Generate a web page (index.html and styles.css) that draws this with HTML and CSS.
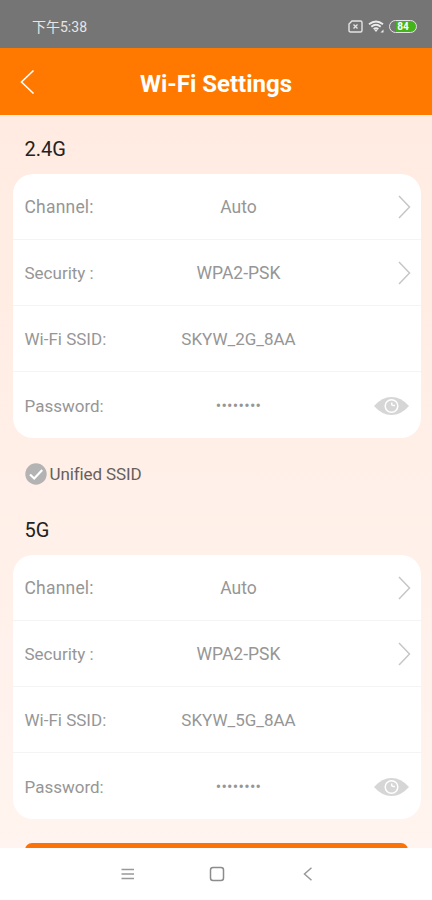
FILE: index.html
```html
<!DOCTYPE html>
<html lang="en">
<head>
  <meta charset="UTF-8" />
  <meta name="viewport" content="width=device-width, initial-scale=1" />
  <title>Wi-Fi Settings</title>
  <link rel="stylesheet" href="styles.css">
</head>
<body>

  <div class="status-bar">
    <span class="time">下午5:38</span>
    <div class="status-icons">
      <svg class="sim" width="15" height="13" viewBox="0 0 15 13">
        <path d="M4 1h8.500q1.500 0 1.500 1.500v8q0 1.500-1.500 1.500h-10q-1.500 0-1.500-1.500V4z" fill="none" stroke="#e4e4e4" stroke-width="1.400"/>
        <path d="M5.500 4.500l4 4M9.500 4.500l-4 4" stroke="#e4e4e4" stroke-width="1.400"/>
      </svg>
      <svg class="wifi" width="17" height="13" viewBox="0 0 17 13">
        <path d="M1 4.200q7-5.600 14 0M3.300 6.700q4.700-3.700 9.400 0M5.600 9q2.400-1.700 4.800 0" fill="none" stroke="#ececec" stroke-width="1.900"/>
        <path d="M6 9.500h4L8 12z" fill="#ececec"/>
        <path d="M12.500 12.500l3-3v3z" fill="#ececec"/>
      </svg>
      <span class="battery">84</span>
    </div>
  </div>

  <header class="header">
    <svg class="back" width="15" height="26" viewBox="0 0 15 26">
      <path d="M13.500 1.500L1.500 13l12 11.500" fill="none" stroke="#fff" stroke-width="1.600"/>
    </svg>
    <h1>Wi-Fi Settings</h1>
  </header>

  <main class="content">
    <h2>2.4G</h2>
    <div class="card">
      <div class="row">
        <span class="label wide">Channel:</span>
        <span class="value">Auto</span>
        <svg class="arrow" width="13" height="24" viewBox="0 0 13 24">
          <path d="M1 1l10.500 11L1 23" fill="none" stroke="#c6c6c6" stroke-width="1.500"/>
        </svg>
      </div>
      <div class="row">
        <span class="label">Security :</span>
        <span class="value">WPA2-PSK</span>
        <svg class="arrow" width="13" height="24" viewBox="0 0 13 24">
          <path d="M1 1l10.500 11L1 23" fill="none" stroke="#c6c6c6" stroke-width="1.500"/>
        </svg>
      </div>
      <div class="row">
        <span class="label">Wi-Fi SSID:</span>
        <span class="value ssid">SKYW_2G_8AA</span>
      </div>
      <div class="row">
        <span class="label">Password:</span>
        <span class="value dots">••••••••</span>
        <svg class="eye" width="35" height="18" viewBox="0 0 35 18">
          <path d="M0 9Q8 0 17.500 0T35 9Q27 18 17.500 18T0 9z" fill="#d6d6d6"/>
          <circle cx="17.500" cy="9" r="6.300" fill="none" stroke="#fff" stroke-width="1.500"/>
          <path d="M18 5.500q-1.500 3.500 3 3" fill="none" stroke="#fff" stroke-width="1.500"/>
        </svg>
      </div>
    </div>

    <div class="unified">
      <svg width="22" height="22" viewBox="0 0 22 22">
        <circle cx="11" cy="11" r="10.700" fill="#b3b3b3"/>
        <path d="M5 11.500l4.200 4 8-8.500" fill="none" stroke="#fff" stroke-width="2.200"/>
      </svg>
      <span>Unified SSID</span>
    </div>

    <h2>5G</h2>
    <div class="card">
      <div class="row">
        <span class="label wide">Channel:</span>
        <span class="value">Auto</span>
        <svg class="arrow" width="13" height="24" viewBox="0 0 13 24">
          <path d="M1 1l10.500 11L1 23" fill="none" stroke="#c6c6c6" stroke-width="1.500"/>
        </svg>
      </div>
      <div class="row">
        <span class="label">Security :</span>
        <span class="value">WPA2-PSK</span>
        <svg class="arrow" width="13" height="24" viewBox="0 0 13 24">
          <path d="M1 1l10.500 11L1 23" fill="none" stroke="#c6c6c6" stroke-width="1.500"/>
        </svg>
      </div>
      <div class="row">
        <span class="label">Wi-Fi SSID:</span>
        <span class="value ssid">SKYW_5G_8AA</span>
      </div>
      <div class="row">
        <span class="label">Password:</span>
        <span class="value dots">••••••••</span>
        <svg class="eye" width="35" height="18" viewBox="0 0 35 18">
          <path d="M0 9Q8 0 17.500 0T35 9Q27 18 17.500 18T0 9z" fill="#d6d6d6"/>
          <circle cx="17.500" cy="9" r="6.300" fill="none" stroke="#fff" stroke-width="1.500"/>
          <path d="M18 5.500q-1.500 3.500 3 3" fill="none" stroke="#fff" stroke-width="1.500"/>
        </svg>
      </div>
    </div>

    <button class="save" aria-label="Save"></button>
  </main>

  <nav class="nav-bar">
    <svg width="14" height="14" viewBox="0 0 14 14">
      <path d="M.5 2.500h12.500M.5 7h12.500M.5 11.500h12.500" stroke="#999" stroke-width="1.300"/>
    </svg>
    <svg width="16" height="16" viewBox="0 0 16 16">
      <rect x="1.500" y="1.500" width="13" height="13" rx="2.500" fill="none" stroke="#8c8c8c" stroke-width="1.500"/>
    </svg>
    <svg width="10" height="14" viewBox="0 0 10 14">
      <path d="M8.500 .8L1.500 7l7 6.200" fill="none" stroke="#999" stroke-width="1.500"/>
    </svg>
  </nav>

</body>
</html>
```
FILE: styles.css
```css
* {
  box-sizing: border-box;
}
body {
  margin: 0;
  height: 900px;
  overflow: hidden;
  display: flex;
  flex-direction: column;
  font-family: Roboto, 'Noto Sans CJK SC', sans-serif;
  background: #fff;
}
.status-bar {
  height: 48px;
  flex: none;
  padding: 4px 15px 0 32px;
  display: flex;
  align-items: center;
  justify-content: space-between;
  background: #757575;
  color: #e6e6e6;
}
.time {
  font-size: 14px;
}
.status-icons {
  display: flex;
  align-items: center;
  gap: 4.5px;
}
.battery {
  width: 28px;
  height: 13px;
  border: 1.5px solid #e4e4e4;
  border-radius: 7px;
  background: linear-gradient(90deg, #757575 6px, #43b51b 6px);
  color: #fff;
  font-size: 10px;
  font-weight: bold;
  display: flex;
  align-items: center;
  justify-content: center;
}
.header {
  height: 67px;
  flex: none;
  display: grid;
  grid-template-columns: 36px 1fr 36px;
  align-items: center;
  background: #ff7900;
}
.back {
  margin-left: 20px;
}
.header h1 {
  margin: 4px 0 0;
  color: #fff;
  font-size: 24px;
  font-weight: 700;
  text-align: center;
}
.content {
  height: 733px;
  flex: none;
  overflow: hidden;
  padding: 20px 11px 0 12.5px;
  background: linear-gradient(#ffebe1, #fff4ef);
}
.content h2 {
  margin: 0 0 11px 12px;
  height: 28px;
  line-height: 28px;
  color: #222;
  font-size: 20px;
  font-weight: 400;
}
.card {
  border-radius: 20px;
  background: #fff;
}
.row {
  height: 66px;
  padding: 1px 0 0 12px;
  display: grid;
  grid-template-columns: 122px 184px 1fr;
  align-items: center;
  border-bottom: 1px solid #f4f4f4;
  color: #969696;
  font-size: 17.5px;
}
.row:last-child {
  border-bottom: none;
}
.label {
  font-size: 17px;
}
.label.wide {
  font-size: 17.5px;
  letter-spacing: 0.2px;
}
.value {
  text-align: center;
}
.value.ssid {
  font-size: 17px;
}
.value.dots {
  font-size: 16px;
  letter-spacing: 0.3px;
}
.arrow {
  justify-self: end;
  margin-right: 10px;
}
.eye {
  justify-self: end;
  margin-right: 12.5px;
}
.unified {
  height: 38px;
  margin: 17px 0 23px 12px;
  display: flex;
  align-items: center;
  gap: 3px;
  color: #65605d;
  font-size: 17px;
  letter-spacing: -0.1px;
}
.save {
  display: block;
  width: 383px;
  height: 48px;
  margin: 24px 0 0 12px;
  border: none;
  border-radius: 7px;
  background: #fb7206;
}
.nav-bar {
  flex: 1;
  padding: 0 0 0 121px;
  display: grid;
  grid-template-columns: 88px 94px 1fr;
  align-items: center;
  background: #fff;
}
```
